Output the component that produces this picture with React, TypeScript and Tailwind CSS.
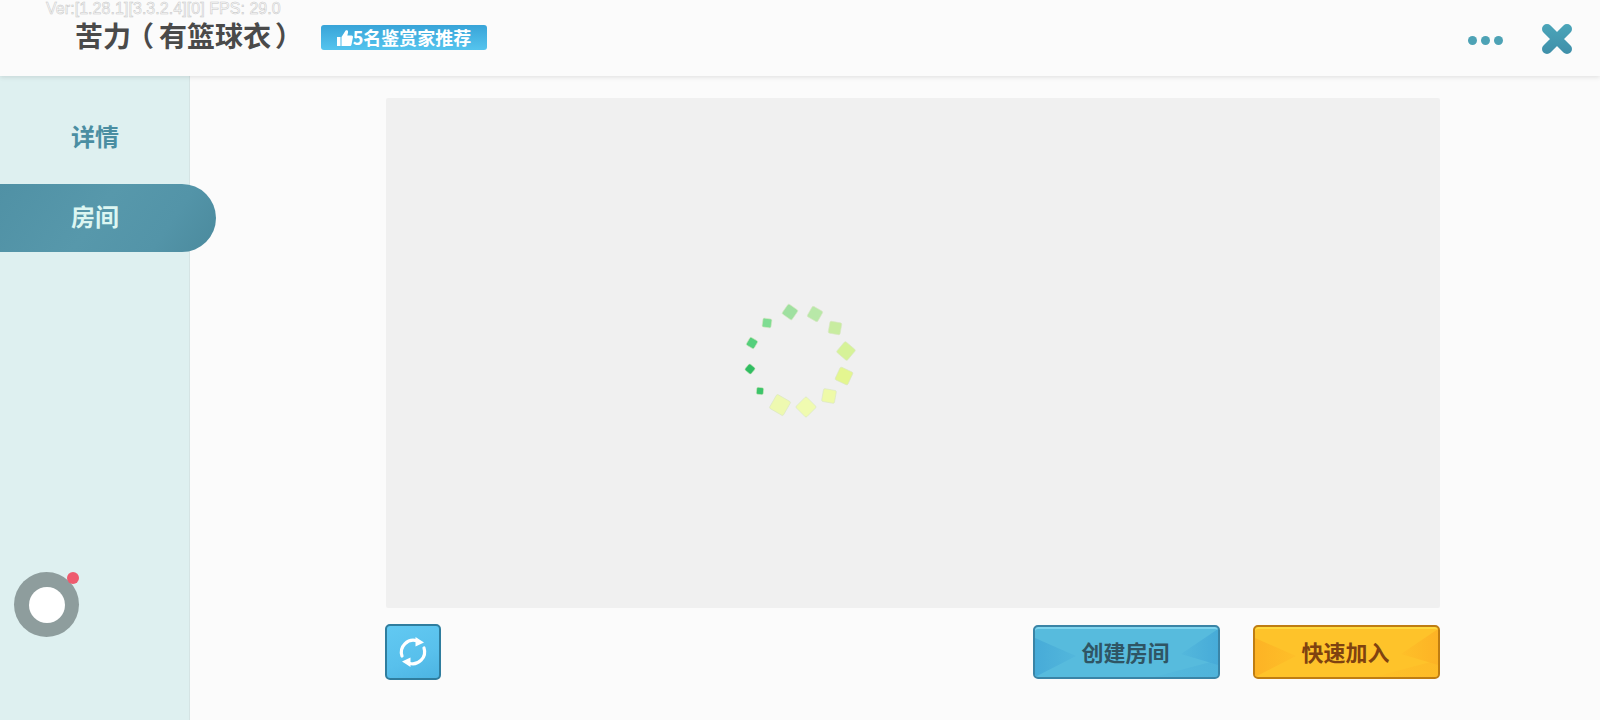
const spinnerDots = [
    { x: 790, y: 312, size: 12, rotate: 35, color: "#9fe0a0" },
    { x: 815, y: 314, size: 12, rotate: 30, color: "#b8e8a8" },
    { x: 835, y: 328, size: 12, rotate: 10, color: "#c8eca0" },
    { x: 846, y: 351, size: 14, rotate: 40, color: "#d6f298" },
    { x: 844, y: 376, size: 14, rotate: 25, color: "#e4f690" },
    { x: 829, y: 396, size: 13, rotate: 10, color: "#eefaa8" },
    { x: 806, y: 407, size: 15, rotate: 45, color: "#f0fbb0" },
    { x: 780, y: 405, size: 16, rotate: 30, color: "#eef9b0" },
    { x: 760, y: 391, size: 7, rotate: 5, color: "#3cc46a" },
    { x: 750, y: 369, size: 8, rotate: 40, color: "#30bd62" },
    { x: 752, y: 343, size: 9, rotate: 30, color: "#55cf7c" },
    { x: 767, y: 323, size: 9, rotate: 8, color: "#7fdc92" },
];

function Spinner() {
    return (
        <svg className="absolute left-[740px] top-[300px]" width="120" height="120" viewBox="740 300 120 120">
            {spinnerDots.map((d) => (
                <rect
                    key={`${d.x}-${d.y}`}
                    x={d.x - d.size / 2}
                    y={d.y - d.size / 2}
                    width={d.size}
                    height={d.size}
                    rx="1.5"
                    fill={d.color}
                    stroke="#d9e6c4"
                    strokeWidth="0.6"
                    transform={`rotate(${d.rotate} ${d.x} ${d.y})`}
                />
            ))}
        </svg>
    );
}

function CloseIcon() {
    return (
        <svg width="30" height="30" viewBox="0 0 30 30" fill="none">
            <defs>
                <linearGradient id="closeFill" gradientUnits="userSpaceOnUse" x1="0" y1="0" x2="0" y2="30">
                    <stop offset="0" stopColor="#4ba5b9" />
                    <stop offset="1" stopColor="#3f8fa9" />
                </linearGradient>
            </defs>
            <path d="M5 5 25 25M25 5 5 25" stroke="url(#closeFill)" strokeWidth="10" strokeLinecap="round" />
        </svg>
    );
}

function RefreshIcon() {
    return (
        <svg width="32" height="32" viewBox="0 0 32 32" fill="none">
            <path d="M5 20A12 12 0 0 1 20 4.800" stroke="#fff" strokeWidth="3.200" strokeLinecap="round" />
            <path d="M18.500 1 27 6.500 18.500 10.500Z" fill="#fff" />
            <path d="M27 12A12 12 0 0 1 12 27.200" stroke="#fff" strokeWidth="3.200" strokeLinecap="round" />
            <path d="M13.500 31 5 25.500 13.500 21.500Z" fill="#fff" />
        </svg>
    );
}

function ThumbIcon() {
    return (
        <svg width="16" height="16" viewBox="0 0 16 16" fill="#fff">
            <path d="M0 7h3.500v9H0z" />
            <path d="M4.500 7 8 1.500c.4-.9 1.200-1.500 2-1.200 1 .3 1.300 1.400 1 2.500L10.300 5.500H14.500c1 0 1.500.8 1.500 1.600L14.500 14.500c-.2 1-.8 1.500-1.800 1.500H4.500Z" />
        </svg>
    );
}

// faint polygons of the game's button skin, they fade into the base colour
function ButtonFacets({ id, dark }: { id: string; dark: string }) {
    return (
        <svg className="absolute inset-0" width="183" height="50" viewBox="0 0 183 50">
            <defs>
                <linearGradient id={`${id}-left`} x1="0" y1="0" x2="1" y2="0">
                    <stop offset="0" stopColor={dark} />
                    <stop offset="1" stopColor={dark} stopOpacity="0.25" />
                </linearGradient>
                <linearGradient id={`${id}-right`} x1="1" y1="0" x2="0" y2="0">
                    <stop offset="0" stopColor={dark} />
                    <stop offset="1" stopColor={dark} stopOpacity="0.2" />
                </linearGradient>
            </defs>
            <path d="M0 11 41 29 0 50Z" fill={`url(#${id}-left)`} />
            <path d="M183 2 146 27 183 38Z" fill={`url(#${id}-right)`} />
            <path d="M119 50 183 33V50Z" fill={`url(#${id}-right)`} opacity="0.5" />
        </svg>
    );
}

export default function App() {
    return (
        <div className="relative flex h-[720px] w-[1600px] flex-col overflow-hidden bg-[#fbfbfb] font-['Noto_Sans_CJK_SC','Noto_Sans',sans-serif]">
            {/* Debug overlay */}
            <div className="absolute left-[46px] top-0 z-20 text-[16px] leading-[17px] tracking-[0.05px] text-[#fbfbfb] font-['Liberation_Sans',sans-serif] [-webkit-text-stroke:0.5px_#c6c6c6]">
                Ver:[1.28.1][3.3.2.4][0] FPS: 29.0
            </div>

            {/* Header */}
            <header className="relative z-10 flex h-[76px] shrink-0 items-center bg-[#fbfbfb] pl-[75px] pr-[28px] shadow-[0_1px_5px_rgba(0,0,0,0.12)]">
                <div className="mb-[6px] w-[225px] text-[28px] font-bold leading-[36px] text-[#4a4a4a]">
                    苦力<span className="ml-[9px] mr-[5px] inline-block [font-feature-settings:'halt']">（</span>有篮球衣<span className="ml-[4px] inline-block [font-feature-settings:'halt']">）</span>
                </div>
                <div className="mb-[1px] ml-[21px] flex h-[25px] w-[166px] items-center justify-center rounded-[3px] bg-gradient-to-b from-[#38a4d8] to-[#55c4ee] text-[18px] font-bold text-white">
                    <ThumbIcon />
                    <span>5名鉴赏家推荐</span>
                </div>
                <div className="ml-auto mt-[4px] flex items-center gap-[4px]">
                    <span className="h-[9px] w-[9px] rounded-full bg-[#4da2b5]" />
                    <span className="h-[9px] w-[9px] rounded-full bg-[#4da2b5]" />
                    <span className="h-[9px] w-[9px] rounded-full bg-[#4da2b5]" />
                </div>
                <div className="mb-[-2px] ml-[39px]">
                    <CloseIcon />
                </div>
            </header>

            <div className="flex min-h-0 flex-1">
                {/* Sidebar */}
                <aside className="flex w-[190px] shrink-0 flex-col border-r border-[#d5e4e4] bg-[#def0f0]">
                    <div className="mt-[28px] flex h-[68px] w-[190px] items-center justify-center pb-[4px] text-[24px] font-bold text-[#4a8ea2]">
                        详情
                    </div>
                    <div className="mt-[12px] flex h-[68px] w-[216px] items-center rounded-r-[34px] bg-[linear-gradient(125deg,#5091a5_0%,#5798ab_45%,#5394a8_75%,#4b8a9d_100%)] pb-[4px] pl-[71px] text-[24px] font-bold text-[#dcf6f2]">
                        房间
                    </div>
                    <div className="relative ml-[14px] mt-[320px] flex h-[65px] w-[65px] items-center justify-center rounded-full bg-[#8e9d9d]">
                        <div className="h-[36px] w-[36px] rounded-full bg-white" />
                        <span className="absolute right-0 top-0 h-[12px] w-[12px] rounded-full bg-[#ee5b6e]" />
                    </div>
                </aside>

                {/* Room list */}
                <main className="flex min-w-0 flex-1 flex-col pl-[196px] pr-[160px] pt-[22px]">
                    <div className="h-[510px] rounded-[2px] bg-[#f0f0f0]" />
                    <div className="mt-[16px] flex items-center">
                        <button className="ml-[-1px] flex h-[56px] w-[56px] items-center justify-center rounded-[5px] border-2 border-[#2f7d9e] bg-[linear-gradient(160deg,#62c9f2_0%,#58c0ec_60%,#4cb4e2_100%)]">
                            <RefreshIcon />
                        </button>
                        <button className="relative ml-auto flex h-[54px] w-[187px] items-center justify-center overflow-hidden rounded-[5px] border-2 border-[#3a84a6] bg-[#57bbdd] pb-[2px] pr-[2px] text-[22px] font-bold text-[#2f5564] shadow-[inset_0_2px_0_#7fd4ee]">
                            <ButtonFacets id="create" dark="#47abd8" />
                            <span className="relative">创建房间</span>
                        </button>
                        <button className="relative ml-[33px] flex h-[54px] w-[187px] items-center justify-center overflow-hidden rounded-[5px] border-2 border-[#bf7d12] bg-[#fec32a] pb-[2px] pr-[2px] text-[22px] font-bold text-[#7f4210] shadow-[inset_0_2px_0_#ffd93e]">
                            <ButtonFacets id="join" dark="#fdb325" />
                            <span className="relative">快速加入</span>
                        </button>
                    </div>
                </main>
            </div>

            <Spinner />
        </div>
    );
}
